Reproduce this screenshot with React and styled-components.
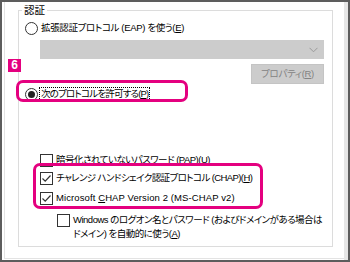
import React from "react";
import styled, { createGlobalStyle } from "styled-components";

const Global = createGlobalStyle`
  html, body { margin: 0; padding: 0; background: #fff; }
  * { box-sizing: border-box; }
  body {
    font-family: "Liberation Sans", "Noto Sans CJK JP", sans-serif;
    font-size: 9.5px;
    color: #000;
    font-feature-settings: "palt";
    letter-spacing: -0.35px;
  }
`;

const Frame = styled.div`
  position: relative;
  width: 350px;
  height: 262px;
  border: 2px solid #5d5d5d;
  display: flex;
  background: #fff;
`;

const Panel = styled.div`
  flex: 1;
  margin: 0 0 1px 2px;
  border-left: 1px solid #e3e3e3;
  border-bottom: 1px solid #e3e3e3;
  padding: 1px 0 0 13px;
`;

const RightBand = styled.div`
  width: 4px;
  background: #e6e6e6;
`;

const Group = styled.fieldset`
  width: 315px;
  min-width: 0;
  height: 244px;
  margin: 0;
  padding: 0 0 0 6px;
  border: 1px solid #dcdcdc;
  display: flex;
  flex-direction: column;
  align-items: flex-start;
`;

const Legend = styled.legend`
  margin-left: -3px;
  padding: 0 2px;
  line-height: 14px;
  height: 14px;
  font-size: 10.5px;
  letter-spacing: 0;
`;

const Row = styled.div`
  display: flex;
  align-items: flex-start;
  gap: 1px;
  margin-top: ${(p) => p.$top || 0}px;
  margin-left: ${(p) => p.$left || 0}px;
  line-height: 14px;
`;

const Radio = styled.span`
  flex: none;
  width: 13px;
  height: 13px;
  margin-top: 1px;
  border: 1px solid #333;
  border-radius: 50%;
  background: #fff;
  display: flex;
  align-items: center;
  justify-content: center;
  &::after {
    content: "";
    display: ${(p) => (p.$checked ? "block" : "none")};
    width: 7px;
    height: 7px;
    border-radius: 50%;
    background: #222;
  }
`;

const Box = styled.span`
  flex: none;
  width: 13px;
  height: 13px;
  margin-top: 1px;
  border: 1px solid #333;
  background: #fff;
  display: flex;
  align-items: center;
  justify-content: center;
`;

const Label = styled.span`
  white-space: nowrap;
  padding: 0 1px 0 1px;
  border: 1px dotted ${(p) => (p.$focus ? "#000" : "transparent")};
  line-height: 12px;
  letter-spacing: ${(p) => (p.$ls !== undefined ? `${p.$ls}px` : "inherit")};
`;

const Multi = styled.span`
  white-space: nowrap;
  line-height: 14px;
  padding-left: 2px;
  letter-spacing: -0.5px;
`;

const U = styled.span`
  text-decoration: underline;
  text-underline-offset: 1px;
`;

const Select = styled.div`
  margin: 5px 0 0 15px;
  width: 284px;
  height: 19px;
  background: #cccccc;
  border: 1px solid #cccccc;
  display: flex;
  align-items: center;
  justify-content: flex-end;
  padding-right: 5px;
`;

const Button = styled.div`
  align-self: flex-end;
  margin: 5px 8px 0 0;
  width: 73px;
  height: 20px;
  background: #cccccc;
  border: 1px solid #c4c4c4;
  color: #838383;
  display: flex;
  align-items: center;
  justify-content: center;
  line-height: 14px;
`;

const Highlight = styled.div`
  position: absolute;
  left: ${(p) => p.$x}px;
  top: ${(p) => p.$y}px;
  width: ${(p) => p.$w}px;
  height: ${(p) => p.$h}px;
  border: 3px solid #e4007f;
  border-radius: 7px;
  pointer-events: none;
`;

const Badge = styled.div`
  position: absolute;
  left: 6px;
  top: 57px;
  width: 13px;
  height: 13px;
  background: #e4007f;
  color: #fff;
  font-family: "Liberation Sans", Arial, sans-serif;
  font-weight: bold;
  font-size: 12px;
  letter-spacing: 0;
  line-height: 13px;
  text-align: center;
`;

const Check = () => (
  <svg width="11" height="11" viewBox="0 0 11 11">
    <polyline points="1.5,5.5 4.2,8.2 9.5,2.5" fill="none" stroke="#333" strokeWidth="1.2" />
  </svg>
);

const Chevron = () => (
  <svg width="9" height="6" viewBox="0 0 9 6">
    <polyline points="0.5,0.8 4.5,4.8 8.5,0.8" fill="none" stroke="#9a9a9a" strokeWidth="1" />
  </svg>
);

export default function App() {
  return (
    <>
      <Global />
      <Frame>
        <Panel>
          <Group>
            <Legend>認証</Legend>
            <Row $top={4}>
              <Radio />
              <Label>
                拡張認証プロトコル (EAP) を使う(<U>E</U>)
              </Label>
            </Row>
            <Select>
              <Chevron />
            </Select>
            <Button>
              プロパティ(<U>R</U>)
            </Button>
            <Row $top={3}>
              <Radio $checked />
              <Label $focus $ls={-0.8}>
                次のプロトコルを許可する(<U>P</U>)
              </Label>
            </Row>
            <Row $top={52} $left={15}>
              <Box />
              <Label $ls={-0.5}>
                暗号化されていないパスワード (PAP)(<U>U</U>)
              </Label>
            </Row>
            <Row $top={4} $left={15}>
              <Box>
                <Check />
              </Box>
              <Label $ls={-0.6}>
                チャレンジ ハンドシェイク認証プロトコル (CHAP)(<U>H</U>)
              </Label>
            </Row>
            <Row $top={6} $left={15}>
              <Box>
                <Check />
              </Box>
              <Label $ls={0.1}>
                Microsoft <U>C</U>HAP Version 2 (MS-CHAP v2)
              </Label>
            </Row>
            <Row $top={8} $left={32}>
              <Box />
              <Multi>
                Windows のログオン名とパスワード (およびドメインがある場合は
                <br />
                ドメイン) を自動的に使う(<U>A</U>)
              </Multi>
            </Row>
          </Group>
        </Panel>
        <RightBand />
        <Badge>6</Badge>
        <Highlight $x={14} $y={78} $w={172} $h={22} />
        <Highlight $x={31} $y={161} $w={230} $h={46} />
      </Frame>
    </>
  );
}
